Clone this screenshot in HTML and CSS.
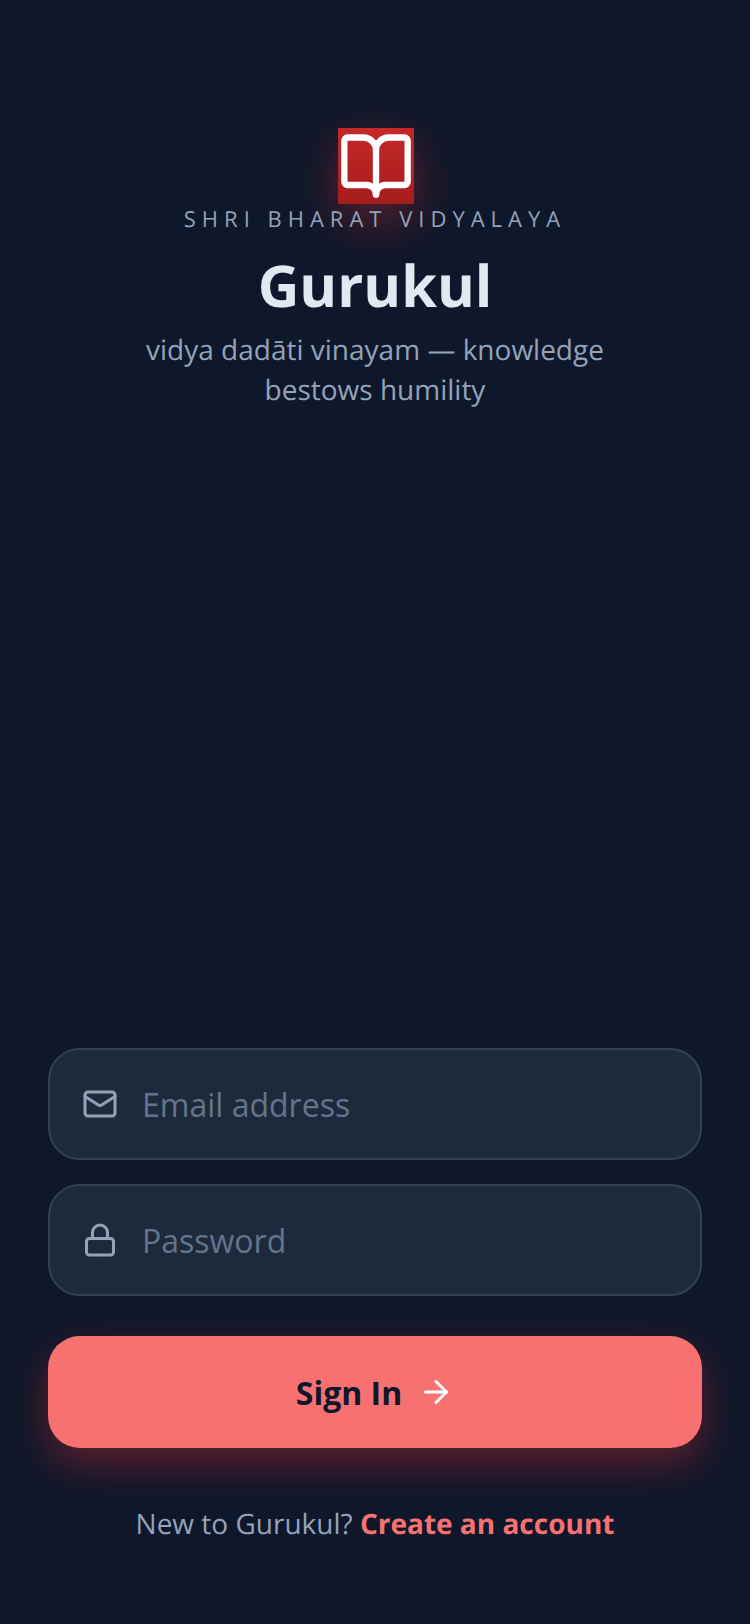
FILE: index.html
```html
<!DOCTYPE html>
<html lang="en">
<head>
    <meta charset="UTF-8">
    <meta name="viewport" content="width=device-width, initial-scale=1.0">
    <title>Gurukul - Sign In</title>
    <link rel="stylesheet" href="styles.css">
</head>
<body>
    <div class="login-page">
        <header class="brand">
            <div class="brand-logo">
                <svg viewBox="0 0 24 24" width="76" height="76" fill="none" stroke="#fff" stroke-width="2" stroke-linecap="round" stroke-linejoin="round">
                    <path d="M12 7v14"/>
                    <path d="M3 18a1 1 0 0 1-1-1V4a1 1 0 0 1 1-1h5a4 4 0 0 1 4 4 4 4 0 0 1 4-4h5a1 1 0 0 1 1 1v13a1 1 0 0 1-1 1h-6a3 3 0 0 0-3 3 3 3 0 0 0-3-3z"/>
                </svg>
            </div>
            <p class="brand-school">SHRI BHARAT VIDYALAYA</p>
            <h1 class="brand-title">Gurukul</h1>
            <p class="brand-motto">vidya dadāti vinayam — knowledge bestows humility</p>
        </header>

        <form class="login-form">
            <label class="field">
                <svg class="field-icon" viewBox="0 0 24 24" width="36" height="36" fill="none" stroke="currentColor" stroke-width="2" stroke-linecap="round" stroke-linejoin="round">
                    <rect x="2" y="4" width="20" height="16" rx="2"/>
                    <path d="m22 7-8.97 5.7a1.94 1.94 0 0 1-2.06 0L2 7"/>
                </svg>
                <input class="field-input" type="email" placeholder="Email address">
            </label>
            <label class="field">
                <svg class="field-icon" viewBox="0 0 24 24" width="36" height="36" fill="none" stroke="currentColor" stroke-width="2" stroke-linecap="round" stroke-linejoin="round">
                    <rect x="3" y="11" width="18" height="11" rx="2" ry="2"/>
                    <path d="M7 11V7a5 5 0 0 1 10 0v4"/>
                </svg>
                <input class="field-input" type="password" placeholder="Password">
            </label>
            <button class="signin-button" type="button">
                <span>Sign In</span>
                <svg viewBox="0 0 24 24" width="36" height="36" fill="none" stroke="#fff" stroke-width="2" stroke-linecap="round" stroke-linejoin="round">
                    <path d="M5 12h14"/>
                    <path d="m12 5 7 7-7 7"/>
                </svg>
            </button>
            <p class="signup-line">New to Gurukul? <a href="#" class="signup-link">Create an account</a></p>
        </form>
    </div>
</body>
</html>
```

FILE: styles.css
```css
* {
    margin: 0;
    padding: 0;
    box-sizing: border-box;
}

body {
    font-family: 'Open Sans', 'Noto Sans', sans-serif;
    background: #0f172a;
    color: #e2e8f0;
    text-rendering: geometricPrecision;
}

.login-page {
    min-height: 100vh;
    display: flex;
    flex-direction: column;
    justify-content: space-between;
    padding: 128px 48px 80px;
}

.brand {
    display: flex;
    flex-direction: column;
    align-items: center;
    text-align: center;
}

.brand-logo {
    width: 76px;
    height: 76px;
    margin-left: 2px;
    background: linear-gradient(180deg, #c62828 0%, #a51c1c 100%);
    box-shadow: 0 16px 48px rgba(211, 47, 47, 0.4);
}

.brand-school {
    font-size: 22px;
    line-height: 30px;
    letter-spacing: 6px;
    color: #94a3b8;
}

.brand-title {
    font-size: 57.6px;
    line-height: 80px;
    font-weight: 700;
    color: #e2e8f0;
    margin-top: 11px;
}

.brand-motto {
    font-size: 28px;
    line-height: 40px;
    color: #94a3b8;
    max-width: 520px;
    margin-top: 5px;
}

.login-form {
    display: flex;
    flex-direction: column;
}

.field {
    height: 112px;
    display: flex;
    align-items: center;
    gap: 24px;
    padding: 0 32px;
    background: #1e293b;
    border: 2px solid #334155;
    border-radius: 32px;
    color: #94a3b8;
    margin-bottom: 24px;
}

.field-input {
    flex: 1;
    min-width: 0;
    background: none;
    border: none;
    outline: none;
    font-family: inherit;
    font-size: 32px;
    color: #e2e8f0;
}

.field-input::placeholder {
    color: #64748b;
    opacity: 1;
}

.signin-button {
    height: 112px;
    margin-top: 16px;
    display: flex;
    align-items: center;
    justify-content: center;
    gap: 16px;
    background: #f87171;
    border: none;
    border-radius: 32px;
    box-shadow: 0 16px 40px rgba(211, 47, 47, 0.4);
    font-family: inherit;
    font-size: 32px;
    font-weight: 700;
    color: #0f172a;
    cursor: pointer;
}

.signup-line {
    margin-top: 56px;
    text-align: center;
    font-size: 28px;
    line-height: 40px;
    color: #94a3b8;
}

.signup-link {
    font-weight: 700;
    color: #f87171;
    text-decoration: none;
}
```
